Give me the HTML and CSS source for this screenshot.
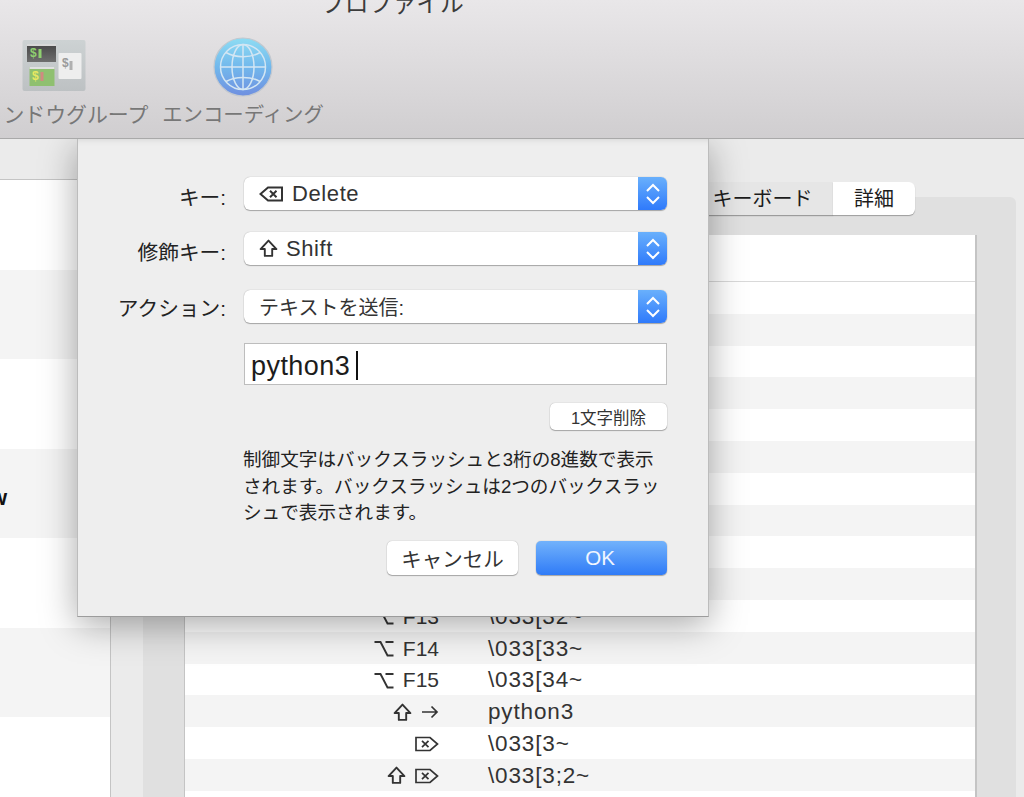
FILE: index.html
```html
<!DOCTYPE html>
<html lang="ja">
<head>
  <meta charset="UTF-8">
  <title>プロファイル</title>
  <link rel="stylesheet" href="styles.css">
</head>
<body>
  <!-- shared key glyphs -->
  <svg class="defs" width="0" height="0">
    <symbol id="key-shift" viewBox="0 0 18 18">
      <path d="M9 1.5 16.5 9.5H12.5V16H5.5V9.5H1.5Z" fill="none" stroke="currentColor" stroke-width="1.8" stroke-linejoin="round"/>
    </symbol>
    <symbol id="key-option" viewBox="0 0 20 17">
      <path d="M0.5 2H6.5L13.500 15.500H19.500M11.500 2H19.500" fill="none" stroke="currentColor" stroke-width="1.9"/>
    </symbol>
    <symbol id="key-right" viewBox="0 0 18 14">
      <path d="M1 7H16M10.5 1.5 16 7 10.5 12.5" fill="none" stroke="currentColor" stroke-width="1.7"/>
    </symbol>
    <symbol id="key-fdel" viewBox="0 0 24 16">
      <path d="M1 1.5H15L22.5 8 15 14.5H1ZM7 4.8 13.5 11.2M13.5 4.8 7 11.2" fill="none" stroke="currentColor" stroke-width="1.7"/>
    </symbol>
    <symbol id="key-bdel" viewBox="0 0 24 16">
      <path d="M23 1.5H9L1.5 8 9 14.5H23ZM11 4.8 17.5 11.2M17.5 4.8 11 11.2" fill="none" stroke="currentColor" stroke-width="2"/>
    </symbol>
    <symbol id="stepper" viewBox="0 0 16 24">
      <path d="M2 9 8 3 14 9M2 15 8 21 14 15" fill="none" stroke="#fff" stroke-width="2"/>
    </symbol>
  </svg>

  <div class="window">
    <!-- Toolbar -->
    <header class="toolbar">
      <div class="window-title">プロファイル</div>
      <div class="toolbar-items">
        <div class="tool tool-groups">
          <svg class="tool-icon" width="64" height="52" viewBox="0 0 64 52">
            <defs>
              <linearGradient id="group-bg" x1="0" y1="0" x2="0" y2="1">
                <stop offset="0" stop-color="#cdd2d3"/>
                <stop offset="1" stop-color="#bdc1c3"/>
              </linearGradient>
              <linearGradient id="term-dark" x1="0" y1="0" x2="0" y2="1">
                <stop offset="0" stop-color="#474747"/>
                <stop offset="1" stop-color="#6e6e6e"/>
              </linearGradient>
            </defs>
            <rect x="0.5" width="63" height="51" rx="2" fill="url(#group-bg)"/>
            <rect x="5" y="4" width="29" height="18" fill="url(#term-dark)"/>
            <rect x="5" y="4" width="29" height="2" fill="#d8d8d8"/>
            <text x="8" y="17" class="term-text" fill="#8fd070">$</text>
            <rect x="16.500" y="9" width="3" height="9" fill="#8fd070"/>
            <rect x="36.500" y="13" width="23" height="26" rx="1" fill="#eeeeee"/>
            <text x="40" y="27" class="term-text" fill="#9a9a9a">$</text>
            <rect x="47.500" y="21" width="3" height="9" fill="#b0b0b0"/>
            <rect x="7.500" y="27" width="25" height="19" fill="#8fc070"/>
            <rect x="7.500" y="27" width="25" height="2" fill="#e0e0e0"/>
            <text x="10" y="40" class="term-text" fill="#e8e860">$</text>
            <rect x="18.500" y="32" width="3" height="9" fill="#d08a80"/>
          </svg>
          <span>ウィンドウグループ</span>
        </div>
        <div class="tool tool-encoding">
          <svg class="tool-icon" width="60" height="60" viewBox="0 0 60 60">
            <defs>
              <linearGradient id="globe-bg" x1="0" y1="0" x2="0" y2="1">
                <stop offset="0" stop-color="#8edcf3"/>
                <stop offset="0.5" stop-color="#72b8ec"/>
                <stop offset="1" stop-color="#6f8fe0"/>
              </linearGradient>
            </defs>
            <circle cx="30" cy="30" r="29" fill="url(#globe-bg)" stroke="#c2c8cf" stroke-width="1.2"/>
            <g fill="none" stroke="#d3e6f3" stroke-width="1.500">
              <circle cx="30" cy="30" r="22.500"/>
              <ellipse cx="30" cy="30" rx="11" ry="22.500"/>
              <path d="M30 7.500V52.500M7.500 30H52.500"/>
              <path d="M13 15.500C22 21 38 21 47 15.500M13 44.500C22 39 38 39 47 44.500"/>
            </g>
          </svg>
          <span>エンコーディング</span>
        </div>
      </div>
    </header>

    <div class="content">
      <!-- Profile list, mostly behind the sheet -->
      <aside class="sidebar">
        <div class="sidebar-head"></div>
        <div class="side-row"></div>
        <div class="side-row alt"></div>
        <div class="side-row"></div>
        <div class="side-row alt"><span class="side-name">w</span></div>
        <div class="side-row"></div>
        <div class="side-row alt"></div>
        <div class="side-row"></div>
      </aside>

      <!-- Key bindings pane -->
      <main class="pane">
        <div class="tabs">
          <div class="tab">キーボード</div>
          <div class="tab active">詳細</div>
        </div>
        <div class="keys-table">
          <div class="keys-head"></div>
          <div class="key-row"></div>
          <div class="key-row"></div>
          <div class="key-row"></div>
          <div class="key-row"></div>
          <div class="key-row"></div>
          <div class="key-row"></div>
          <div class="key-row"></div>
          <div class="key-row"></div>
          <div class="key-row"></div>
          <div class="key-row"></div>
          <div class="key-row">
            <div class="key-combo"><svg class="k-option"><use href="#key-option"/></svg>F13</div>
            <div class="key-value">\033[32~</div>
          </div>
          <div class="key-row">
            <div class="key-combo"><svg class="k-option"><use href="#key-option"/></svg>F14</div>
            <div class="key-value">\033[33~</div>
          </div>
          <div class="key-row">
            <div class="key-combo"><svg class="k-option"><use href="#key-option"/></svg>F15</div>
            <div class="key-value">\033[34~</div>
          </div>
          <div class="key-row">
            <div class="key-combo"><svg class="k-shift"><use href="#key-shift"/></svg><svg class="k-right"><use href="#key-right"/></svg></div>
            <div class="key-value">python3</div>
          </div>
          <div class="key-row">
            <div class="key-combo"><svg class="k-fdel"><use href="#key-fdel"/></svg></div>
            <div class="key-value">\033[3~</div>
          </div>
          <div class="key-row">
            <div class="key-combo"><svg class="k-shift"><use href="#key-shift"/></svg><svg class="k-fdel"><use href="#key-fdel"/></svg></div>
            <div class="key-value">\033[3;2~</div>
          </div>
          <div class="key-row"></div>
        </div>
      </main>
    </div>

    <!-- Sheet -->
    <div class="sheet">
      <div class="field field-key">
        <label>キー:</label>
        <div class="select">
          <div class="select-text latin"><svg class="s-bdel"><use href="#key-bdel"/></svg>Delete</div>
          <div class="select-arrows"><svg class="stepper"><use href="#stepper"/></svg></div>
        </div>
      </div>
      <div class="field field-mod">
        <label>修飾キー:</label>
        <div class="select">
          <div class="select-text latin"><svg class="s-shift"><use href="#key-shift"/></svg>Shift</div>
          <div class="select-arrows"><svg class="stepper"><use href="#stepper"/></svg></div>
        </div>
      </div>
      <div class="field field-action">
        <label>アクション:</label>
        <div class="select">
          <div class="select-text">テキストを送信:</div>
          <div class="select-arrows"><svg class="stepper"><use href="#stepper"/></svg></div>
        </div>
      </div>
      <div class="send-box">python3<span class="caret"></span></div>
      <div class="delete-line">
        <button class="btn btn-small">1文字削除</button>
      </div>
      <p class="help">制御文字はバックスラッシュと3桁の8進数で表示<br>されます。バックスラッシュは2つのバックスラッ<br>シュで表示されます。</p>
      <div class="actions">
        <button class="btn btn-cancel">キャンセル</button>
        <button class="btn btn-ok">OK</button>
      </div>
    </div>
  </div>
</body>
</html>
```

FILE: styles.css
```css
* {
  box-sizing: border-box;
}

html, body {
  margin: 0;
  height: 100%;
  overflow: hidden;
}

body {
  font-family: "Liberation Sans", "Noto Sans CJK JP", sans-serif;
  color: #2a2a2a;
  background: #ebebeb;
}

.defs {
  position: absolute;
}

.window {
  position: relative;
  width: 1024px;
  height: 797px;
  overflow: hidden;
}

/* Toolbar */
.toolbar {
  position: relative;
  z-index: 2;
  height: 139px;
  background: linear-gradient(#e9e7e9, #d0ced0);
  border-bottom: 1px solid #a9a9a9;
  overflow: hidden;
}

.window-title {
  height: 20px;
  margin-top: -11px;
  padding-left: 321px;
  font-size: 23.8px;
  line-height: 30px;
  color: #3c3c3c;
}

.toolbar-items {
  display: flex;
  gap: 18px;
  margin: 28px 0 0 -35px;
}

.tool {
  display: flex;
  flex-direction: column;
  align-items: center;
  font-size: 20.4px;
  line-height: 28px;
  color: #777;
  white-space: nowrap;
}

.tool-groups {
  width: 180px;
  padding-top: 3px;
  font-size: 20.9px;
}

.tool-groups .tool-icon {
  margin-left: -3px;
}

.tool-groups span {
  margin-top: 9px;
}

.tool-encoding {
  width: 160px;
}

.tool-encoding span {
  margin-top: 4px;
}

.term-text {
  font-family: "Liberation Sans", sans-serif;
  font-size: 12px;
  font-weight: bold;
}

/* Main area */
.content {
  display: flex;
  height: 658px;
}

.sidebar {
  width: 111px;
  flex-shrink: 0;
  border-right: 1px solid #c4c4c4;
  background: #fff;
}

.sidebar-head {
  height: 41px;
  background: #ebebeb;
  border-bottom: 1px solid #c4c4c4;
}

.side-row {
  height: 89.5px;
  display: flex;
  align-items: center;
  overflow: hidden;
}

.side-row.alt {
  background: #f4f4f4;
}

.side-name {
  margin-left: -10px;
  padding-top: 9px;
  font-size: 22px;
  font-weight: bold;
  color: #111;
}

.pane {
  flex: 1;
  min-width: 0;
  margin: 58px 8px 0 32px;
  padding: 0 41px;
  background: #e0e0e0;
  border-radius: 6px 6px 0 0;
}

.tabs {
  display: flex;
  justify-content: flex-end;
  height: 33px;
  margin: -15px 60px 20px 0;
}

.tab {
  width: 141px;
  background: #e6e6e6;
  font-size: 20px;
  line-height: 34px;
  text-align: center;
  color: #1c1c1c;
  box-shadow: 0 1px 1px rgba(0, 0, 0, 0.3);
}

.tab.active {
  width: 82px;
  background: #fff;
  border-radius: 0 6px 6px 0;
}

.keys-table {
  width: 793px;
  background: #fff;
  border-left: 1px solid #c4c4c4;
  border-right: 2px solid #c4c4c4;
}

.keys-head {
  height: 47px;
  border-bottom: 1px solid #d9d9d9;
}

.key-row {
  display: flex;
  align-items: center;
  height: 31.8px;
  padding-top: 2px;
  font-size: 22.5px;
  letter-spacing: 0.7px;
  color: #333;
}

.key-row:nth-child(odd) {
  background: #f4f4f4;
}

.key-combo {
  display: flex;
  justify-content: flex-end;
  align-items: center;
  width: 254px;
  font-size: 21px;
  letter-spacing: 0;
}

.key-value {
  margin-left: 49px;
  letter-spacing: 0.85px;
}

.k-option {
  width: 20px;
  height: 17px;
  margin-right: 9px;
}

.k-shift {
  width: 19px;
  height: 19px;
  margin-right: 9px;
}

.k-right {
  width: 18px;
  height: 14px;
}

.k-fdel {
  width: 24px;
  height: 16px;
}

/* Sheet */
.sheet {
  position: absolute;
  z-index: 1;
  left: 77px;
  top: 139px;
  width: 632px;
  height: 478px;
  padding: 38px 41px 0 0;
  background: #eeeeee;
  border-left: 1px solid #bcbcbc;
  border-right: 1px solid #bcbcbc;
  border-bottom: 1px solid #9c9c9c;
  box-shadow: inset 0 7px 6px -6px rgba(0, 0, 0, 0.1), 0 8px 34px rgba(0, 0, 0, 0.34);
}

.field {
  display: flex;
  align-items: center;
  justify-content: flex-end;
  height: 33px;
}

.field-mod {
  margin-top: 22px;
}

.field-action {
  margin-top: 25px;
}

.field label {
  font-size: 20.7px;
  line-height: 33px;
  margin-right: 18px;
  padding-top: 7px;
  color: #222;
}

.field-action label {
  padding-top: 3px;
}

.select {
  display: flex;
  justify-content: space-between;
  width: 423px;
  height: 33px;
  background: #fff;
  border-radius: 6px;
  box-shadow: 0 0 1px rgba(0, 0, 0, 0.35), 0 1px 1px rgba(0, 0, 0, 0.28);
  overflow: hidden;
}

.select-text {
  display: flex;
  align-items: center;
  padding-left: 15px;
  font-size: 20px;
  color: #333;
}

.select-text.latin {
  font-size: 22px;
  letter-spacing: 0.6px;
}

.s-bdel {
  width: 24px;
  height: 16px;
  margin-right: 9px;
}

.s-shift {
  width: 19px;
  height: 19px;
  margin-right: 8px;
}

.select-arrows {
  display: flex;
  align-items: center;
  justify-content: center;
  width: 29px;
  background: linear-gradient(#69b0fc, #2f7afb);
}

.stepper {
  width: 16px;
  height: 24px;
}

.send-box {
  display: flex;
  align-items: center;
  width: 423px;
  height: 42px;
  margin: 20px 0 0 166px;
  padding: 5px 0 0 6px;
  background: #fff;
  border: 1px solid #bdbdbd;
  font-size: 27px;
  letter-spacing: 0.45px;
  color: #1c1c1c;
}

.caret {
  width: 2px;
  height: 29px;
  margin: -3px 0 0 6px;
  background: #111;
}

.delete-line {
  display: flex;
  justify-content: flex-end;
  margin-top: 18px;
}

.btn {
  border: none;
  background: #fff;
  border-radius: 5px;
  font-family: inherit;
  color: #333;
  box-shadow: 0 0 1px rgba(0, 0, 0, 0.35), 0 1px 1px rgba(0, 0, 0, 0.28);
}

.btn-small {
  width: 117px;
  height: 27px;
  padding: 0;
  font-size: 16.5px;
}

.help {
  margin: 17px 0 0 165px;
  font-size: 18.6px;
  line-height: 26.5px;
  white-space: nowrap;
  color: #222;
}

.actions {
  display: flex;
  justify-content: flex-end;
  gap: 18px;
  margin-top: 14px;
}

.btn-cancel, .btn-ok {
  width: 131px;
  height: 34px;
  padding: 0;
  font-size: 20.5px;
}

.btn-ok {
  padding-right: 3px;
  background: linear-gradient(#72b2fb, #2f7bf7);
  color: #f0f6ff;
}
```
